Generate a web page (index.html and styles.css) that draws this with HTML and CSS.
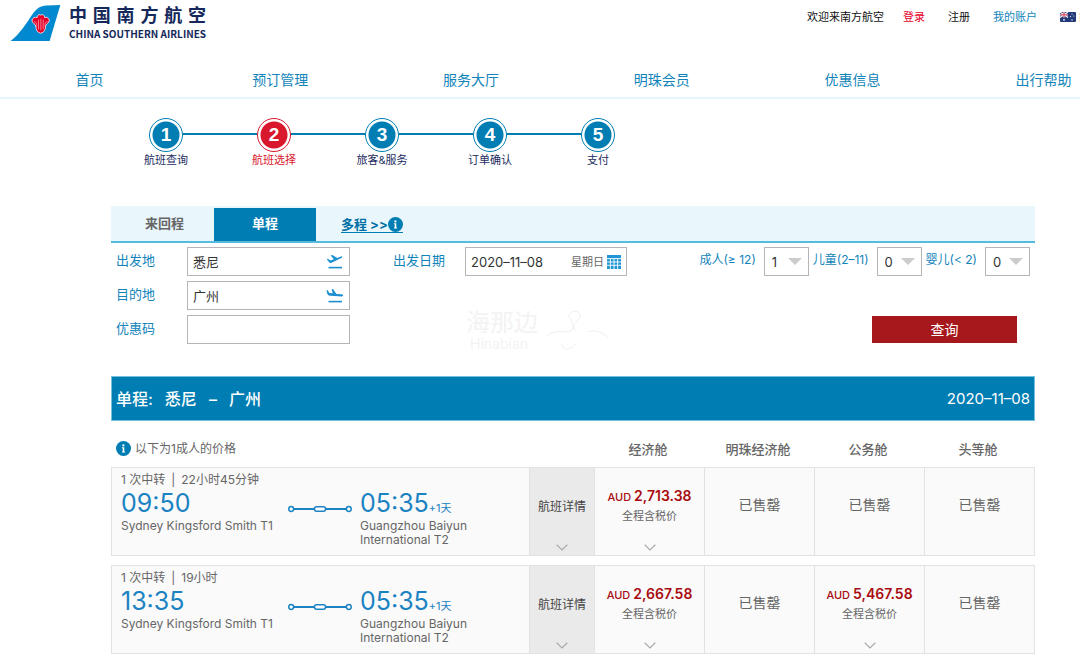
FILE: index.html
```
<!DOCTYPE html>
<html lang="zh-CN">

<head>
    <meta charset="UTF-8">
    <meta name="viewport" content="width=device-width, initial-scale=1.0">
    <title>中国南方航空</title>
    <link rel="stylesheet" href="styles.css">
</head>

<body>
    <!-- shared icons -->
    <svg class="sprite" aria-hidden="true">
        <symbol id="info" viewBox="0 0 15 15">
            <circle cx="7.5" cy="7.5" r="7.5" fill="#007db2"/>
            <circle cx="7.4" cy="4.4" r="1.1" fill="#fff"/>
            <path d="M6 6.3h2.3v4.2h.8v.9H5.900v-.9h.8V7.200H6z" fill="#fff"/>
        </symbol>
        <symbol id="route" viewBox="0 0 64 8">
            <path d="M5.5 4H26M38 4H58.5" stroke="#1b83c2" stroke-width="1.8"/>
            <circle cx="3.2" cy="4" r="2.4" fill="#fff" stroke="#1b83c2" stroke-width="1.5"/>
            <circle cx="60.8" cy="4" r="2.4" fill="#fff" stroke="#1b83c2" stroke-width="1.5"/>
            <rect x="26.5" y="1.7" width="11" height="4.600" rx="2" fill="#fff" stroke="#1b83c2" stroke-width="1.5"/>
        </symbol>
        <symbol id="down" viewBox="0 0 12 7">
            <path d="M.7.7 6 5.900 11.300.7" fill="none" stroke="#aaa" stroke-width="1.2"/>
        </symbol>
    </svg>

    <header class="header">
        <a class="logo" href="#">
            <svg class="logo-tail" viewBox="0 0 51 38" aria-hidden="true">
                <path d="M0 37C10 29 16 19 22 10C26 4 30 1 37 .5L51 0L40 37Z" fill="#0089cf"/>
                <path d="M31 10.500C32.500 9 35 10.500 34.800 13C36.500 11.800 40.300 13.600 39.500 16.500C39 18.800 36.500 19.500 36 21.500C35.800 25 34.500 28.500 30.800 29C27.200 28.500 26 25 25.800 21.500C25.200 19.500 22.600 18.800 22 16.500C21.500 13.600 25 11.800 27.200 13C27 10.500 29.500 9 31 10.500Z" fill="#e60027" stroke="#fff" stroke-width=".8"/>
                <path d="M31 14V26M28.600 15V25M33.400 15V25M24 17C27 17.500 26.400 19.500 26.800 22M38 17C35 17.500 35.600 19.500 35.200 22" fill="none" stroke="#fff" stroke-width=".5"/>
            </svg>
            <span class="logo-text">
                <span class="logo-cn">中国南方航空</span>
                <span class="logo-en">CHINA SOUTHERN AIRLINES</span>
            </span>
        </a>
        <div class="user">
            <span>欢迎来南方航空</span>
            <a class="login" href="#">登录</a>
            <a href="#">注册</a>
            <a class="account" href="#">我的账户</a>
            <a class="lang" href="#">
                <svg width="16" height="10" viewBox="0 0 16 10" aria-hidden="true">
                    <rect width="16" height="10" rx="1" fill="#223a78"/>
                    <path d="M0 0 8 5.500M8 0 0 5.500" stroke="#fff" stroke-width="1.2"/>
                    <path d="M4 0V5.500M0 2.800H8" stroke="#fff" stroke-width="1.6"/>
                    <path d="M4 0V5.500M0 2.800H8" stroke="#d8213b" stroke-width=".9"/>
                    <circle cx="4" cy="7.8" r=".9" fill="#fff"/>
                    <circle cx="12" cy="2" r=".6" fill="#fff"/>
                    <circle cx="10.5" cy="4.6" r=".6" fill="#fff"/>
                    <circle cx="13.8" cy="4" r=".6" fill="#fff"/>
                    <circle cx="12" cy="8" r=".7" fill="#fff"/>
                </svg>
                简
            </a>
        </div>
    </header>

    <nav class="nav">
        <a href="#">首页</a>
        <a href="#">预订管理</a>
        <a href="#">服务大厅</a>
        <a href="#">明珠会员</a>
        <a href="#">优惠信息</a>
        <a href="#">出行帮助</a>
    </nav>

    <main class="main">
        <ol class="steps">
            <li><span class="num">1</span>航班查询</li>
            <li class="current"><span class="num">2</span>航班选择</li>
            <li><span class="num">3</span>旅客&amp;服务</li>
            <li><span class="num">4</span>订单确认</li>
            <li><span class="num">5</span>支付</li>
        </ol>

        <div class="tabs">
            <button class="tab" type="button">来回程</button>
            <button class="tab active" type="button">单程</button>
            <a class="multi" href="#">多程 &gt;&gt;<svg width="15" height="15"><use href="#info"/></svg></a>
        </div>

        <form class="search">
            <div class="places">
                <label for="from">出发地</label>
                <div class="box">
                    <input id="from" type="text" value="悉尼">
                    <svg width="18" height="16" viewBox="0 0 18 16" fill="#1c8fd0" aria-hidden="true">
                        <path d="M2.500 12.800H16V14.400H2.500z"/>
                        <path d="M.8 5.200 2 4.800 4.300 6.500 7.800 5.200 4.700 1.500 6.300 1 11.300 4 15 2.400C16 2 16.900 3 15.800 3.700L5.500 8.800C4.500 9.200 3.700 9 3.100 8.300z"/>
                    </svg>
                </div>
                <label for="to">目的地</label>
                <div class="box">
                    <input id="to" type="text" value="广州">
                    <svg width="18" height="16" viewBox="0 0 18 16" fill="#1c8fd0" aria-hidden="true">
                        <path d="M2.500 12.800H16V14.400H2.500z"/>
                        <path d="M.5 2.200 1.800 2.300 3.300 4.900 6.700 5.200 5.600 1 7.200 1.300 10.400 5.900 15.800 6.300C17.700 6.500 17.600 8.400 16 8.400L4.200 7.700C2.200 7.500 1.200 6.300 1 4.700z"/>
                    </svg>
                </div>
                <label for="code">优惠码</label>
                <div class="box"><input id="code" type="text"></div>
            </div>

            <div class="when">
                <div class="date">
                    <label for="date">出发日期</label>
                    <div class="box">
                        <input id="date" type="text" value="2020–11–08">
                        <span class="weekday">星期日</span>
                        <svg width="14" height="14" viewBox="0 0 14 14" aria-hidden="true">
                            <rect width="14" height="14" fill="#2196d4"/>
                            <path d="M0 3.600H14M0 7H14M0 10.300H14M3.400 3.600V14M7 3.600V14M10.600 3.600V14" stroke="#fff" stroke-width=".9"/>
                        </svg>
                    </div>
                </div>
                <div class="watermark">
                    <div>
                        <p class="mark-cn">海那边</p>
                        <p class="mark-en">Hinabian</p>
                    </div>
                    <svg width="64" height="42" viewBox="0 0 64 42" fill="none" stroke="#f0f0f0" aria-hidden="true">
                        <path d="M1 26C8 19 18 23 25 21C29 18 26 10 22 5M23 5C25 0 35 0 34 6C33 12 25 13 29 21M16 33C15 39 24 42 29 34M42 22C50 19 57 23 62 27"/>
                    </svg>
                </div>
            </div>

            <div class="side">
                <div class="people">
                    <label for="adult">成人(≥ 12)</label>
                    <div class="pick">
                        <select id="adult"><option>1</option></select>
                    </div>
                    <label for="child">儿童(2–11)</label>
                    <div class="pick">
                        <select id="child"><option>0</option></select>
                    </div>
                    <label for="baby">婴儿(&lt; 2)</label>
                    <div class="pick">
                        <select id="baby"><option>0</option></select>
                    </div>
                </div>
                <button class="query" type="button">查询</button>
            </div>
        </form>

        <div class="title">
            <h2><span>单程:</span> <span>悉尼</span> <span>–</span> <span>广州</span></h2>
            <span class="day">2020–11–08</span>
        </div>

        <table class="flights">
            <colgroup>
                <col>
                <col class="col-detail">
                <col class="col-fare">
                <col class="col-fare">
                <col class="col-fare">
                <col class="col-fare">
            </colgroup>
            <thead>
                <tr>
                    <td colspan="2">
                        <div class="note"><svg width="15" height="15"><use href="#info"/></svg>以下为1成人的价格</div>
                    </td>
                    <th>经济舱</th>
                    <th>明珠经济舱</th>
                    <th>公务舱</th>
                    <th>头等舱</th>
                </tr>
            </thead>
            <tbody>
                <tr>
                    <td>
                        <div class="trip">
                            <p class="stops"><span>1 次中转</span><span>|</span><span>22小时45分钟</span></p>
                            <div class="depart">
                                <p class="time">09:50</p>
                                <p class="airport">Sydney Kingsford Smith T1</p>
                            </div>
                            <svg class="route" width="64" height="8"><use href="#route"/></svg>
                            <div class="arrive">
                                <p class="time">05:35<small>+1天</small></p>
                                <p class="airport">Guangzhou Baiyun International T2</p>
                            </div>
                        </div>
                    </td>
                    <td class="detail">
                        <button type="button">航班详情<svg width="12" height="7"><use href="#down"/></svg></button>
                    </td>
                    <td>
                        <button class="fare" type="button">
                            <span class="price">AUD <b>2,713.38</b></span>
                            <span>全程含税价</span>
                            <svg width="12" height="7"><use href="#down"/></svg>
                        </button>
                    </td>
                    <td class="sold">已售罄</td>
                    <td class="sold">已售罄</td>
                    <td class="sold">已售罄</td>
                </tr>
                <tr>
                    <td>
                        <div class="trip">
                            <p class="stops"><span>1 次中转</span><span>|</span><span>19小时</span></p>
                            <div class="depart">
                                <p class="time">13:35</p>
                                <p class="airport">Sydney Kingsford Smith T1</p>
                            </div>
                            <svg class="route" width="64" height="8"><use href="#route"/></svg>
                            <div class="arrive">
                                <p class="time">05:35<small>+1天</small></p>
                                <p class="airport">Guangzhou Baiyun International T2</p>
                            </div>
                        </div>
                    </td>
                    <td class="detail">
                        <button type="button">航班详情<svg width="12" height="7"><use href="#down"/></svg></button>
                    </td>
                    <td>
                        <button class="fare" type="button">
                            <span class="price">AUD <b>2,667.58</b></span>
                            <span>全程含税价</span>
                            <svg width="12" height="7"><use href="#down"/></svg>
                        </button>
                    </td>
                    <td class="sold">已售罄</td>
                    <td>
                        <button class="fare" type="button">
                            <span class="price">AUD <b>5,467.58</b></span>
                            <span>全程含税价</span>
                            <svg width="12" height="7"><use href="#down"/></svg>
                        </button>
                    </td>
                    <td class="sold">已售罄</td>
                </tr>
            </tbody>
        </table>
    </main>
</body>

</html>
```
FILE: styles.css
```
* {
    box-sizing: border-box;
}

body {
    margin: 0;
    font-family: Inter, "Noto Sans CJK SC", sans-serif;
    font-size: 12px;
    line-height: 16px;
    color: #666;
    background: #fff;
    overflow-x: hidden;
}

p, h2, ol {
    margin: 0;
    padding: 0;
}

a {
    color: inherit;
    text-decoration: none;
}

button, input, select {
    font: inherit;
    color: inherit;
    margin: 0;
    padding: 0;
    border: none;
    border-radius: 0;
    background: none;
}

svg {
    flex: none;
}

.sprite {
    display: none;
}

/* header */
.header {
    display: flex;
    justify-content: space-between;
    align-items: flex-start;
    height: 64px;
    padding: 5px 0 0 10px;
}

.logo {
    display: flex;
    gap: 8px;
    color: #14285a;
}

.logo-tail {
    width: 51px;
    height: 37px;
}

.logo-text {
    display: flex;
    flex-direction: column;
}

.logo-cn {
    font-size: 18px;
    font-weight: 700;
    line-height: 22px;
    text-align-last: justify;
}

.logo-en {
    font-family: "Noto Sans CJK SC", sans-serif;
    font-size: 10px;
    font-weight: 700;
    line-height: 13px;
    white-space: nowrap;
}

.user {
    display: flex;
    gap: 23px;
    padding-top: 4px;
    margin-right: -10px;
    font-size: 11px;
    color: #111;
    white-space: nowrap;
}

.user .login {
    color: #e60027;
    margin-left: -4px;
}

.user .account {
    color: #1284ba;
}

.lang {
    display: flex;
    align-items: center;
    gap: 3px;
}

.nav {
    display: grid;
    grid-template-columns: repeat(6, 1fr);
    width: 106%;
    height: 35px;
    margin-left: -6px;
    border-bottom: 2px solid #e4f5fd;
    font-size: 14px;
    line-height: 32px;
    text-align: center;
    color: #1284ba;
}

.main {
    margin: 0 45px 0 111px;
}

/* booking steps */
.steps {
    display: flex;
    list-style: none;
    padding: 19px 0 0 1px;
    height: 107px;
    font-size: 11px;
    color: #1c2c60;
}

.steps li {
    position: relative;
    display: flex;
    flex-direction: column;
    align-items: center;
    width: 108px;
}

.steps li + li::before {
    content: "";
    position: absolute;
    top: 15px;
    right: 71px;
    width: 74px;
    height: 2px;
    background: #007db2;
}

.num {
    width: 34px;
    height: 34px;
    border: 1px solid #007db2;
    border-radius: 50%;
    background: radial-gradient(circle, #007db2 13px, #fff 14px);
    color: #fff;
    font-family: "Liberation Sans", sans-serif;
    font-size: 19px;
    font-weight: 700;
    line-height: 32px;
    text-align: center;
}

.steps .current {
    color: #d9182d;
}

.current .num {
    border-color: #d9182d;
    background: radial-gradient(circle, #d9182d 13px, #fff 14px);
}

/* search form */
.tabs {
    display: flex;
    align-items: flex-end;
    height: 37px;
    background: #e9f7fd;
    border-bottom: 2px solid #55bce0;
    font-size: 13px;
    font-weight: 700;
}

.tab {
    width: 103px;
    height: 33px;
    padding: 0 0 3px 4px;
}

.tab.active {
    width: 102px;
    padding-left: 0;
    background: #007db2;
    color: #fff;
}

.multi {
    display: flex;
    align-items: center;
    margin: 0 0 8px 25px;
    border-bottom: 1px solid #007db2;
    color: #0070a5;
}

.search {
    display: flex;
    height: 133px;
    padding: 4px 5px 0;
    color: #1284ba;
}

.search label {
    font-size: 13px;
    line-height: 27px;
}

.places {
    display: grid;
    grid-template-columns: 71px 163px;
    grid-auto-rows: 29px;
    gap: 5px 0;
}

.box {
    display: flex;
    align-items: center;
    height: 29px;
    padding: 0 5px;
    border: 1px solid #b5b5b5;
    color: #333;
}

.box input {
    flex: 1;
    min-width: 0;
    height: 100%;
    font-size: 13px;
}

.when {
    margin-left: 43px;
}

.date {
    display: grid;
    grid-template-columns: 72px 162px;
}

.weekday {
    margin-right: 3px;
    font-size: 11px;
    color: #666;
}

.watermark {
    display: flex;
    gap: 8px;
    padding: 34px 0 0 73px;
    color: #f3f3f3;
}

.mark-cn {
    font-size: 24px;
    line-height: 26px;
}

.mark-en {
    padding-left: 4px;
    font-size: 14px;
    line-height: 16px;
}

.side {
    display: flex;
    flex-direction: column;
    margin-left: auto;
}

.people {
    display: flex;
    gap: 4px;
}

.people label {
    font-size: 12px;
    line-height: 25px;
    white-space: nowrap;
}

.pick {
    position: relative;
    margin-left: 4px;
}

.pick::after {
    content: "";
    position: absolute;
    top: 11px;
    right: 7px;
    border: 7px solid transparent;
    border-top-color: #ccc;
    border-bottom: none;
    pointer-events: none;
}

.pick select {
    width: 45px;
    height: 29px;
    padding-left: 7px;
    border: 1px solid #b5b5b5;
    appearance: none;
    font-size: 13px;
    color: #333;
}

.query {
    width: 145px;
    height: 27px;
    margin: 40px 13px 0 auto;
    background: #a6181c;
    color: #fff;
    font-size: 14px;
}

/* results */
.title {
    display: flex;
    justify-content: space-between;
    align-items: center;
    height: 45px;
    padding: 0 4px;
    border: 1px solid #74bfdc;
    background: #007db2;
    color: #fff;
}

.title h2 {
    display: flex;
    gap: 12px;
    font-size: 16px;
    font-weight: 500;
}

.day {
    font-size: 15px;
}

.flights {
    width: 100%;
    table-layout: fixed;
    border-collapse: separate;
    border-spacing: 0 9px;
}

.col-detail {
    width: 65px;
}

.col-fare {
    width: 110px;
}

.flights th,
.flights td {
    padding: 0;
}

.flights thead tr {
    height: 28px;
}

.flights thead th,
.flights thead td {
    padding-top: 9px;
}

.flights th {
    padding-right: 4px;
    font-size: 13px;
    font-weight: 500;
}

.note {
    display: flex;
    align-items: center;
    gap: 4px;
    padding-left: 5px;
}

.flights tbody td {
    height: 89px;
    border: 1px solid #e2e2e2;
    border-left: none;
    background: #fafafa;
    vertical-align: top;
}

.flights tbody td:first-child {
    border-left: 1px solid #e2e2e2;
}

.trip {
    display: grid;
    grid-template-columns: 163px 64px 120px;
    column-gap: 4px;
    padding: 4px 0 0 9px;
}

.stops {
    display: flex;
    gap: 6px;
    grid-column: 1 / -1;
}

.time {
    font-size: 25px;
    line-height: 31px;
    color: #1b83c2;
}

.time small {
    font-size: 11px;
    line-height: 1;
}

.airport {
    line-height: 14px;
}

.depart .airport {
    white-space: nowrap;
}

.route {
    margin-top: 17px;
}

.arrive {
    padding-left: 4px;
}

.flights tbody .detail {
    background: #eaeaea;
}

.flights button {
    display: flex;
    flex-direction: column;
    align-items: center;
    width: 100%;
    height: 87px;
    padding: 31px 0 4px;
    color: #444;
}

.flights button svg {
    margin-top: auto;
}

.flights .fare {
    padding-top: 20px;
    gap: 3px;
    font-size: 11px;
    color: #666;
}

.price {
    color: #a80c10;
    font-weight: 500;
}

.price b {
    font-size: 14px;
    font-weight: 600;
}

.flights tbody .sold {
    padding-bottom: 14px;
    font-size: 14px;
    text-align: center;
    vertical-align: middle;
}
```
